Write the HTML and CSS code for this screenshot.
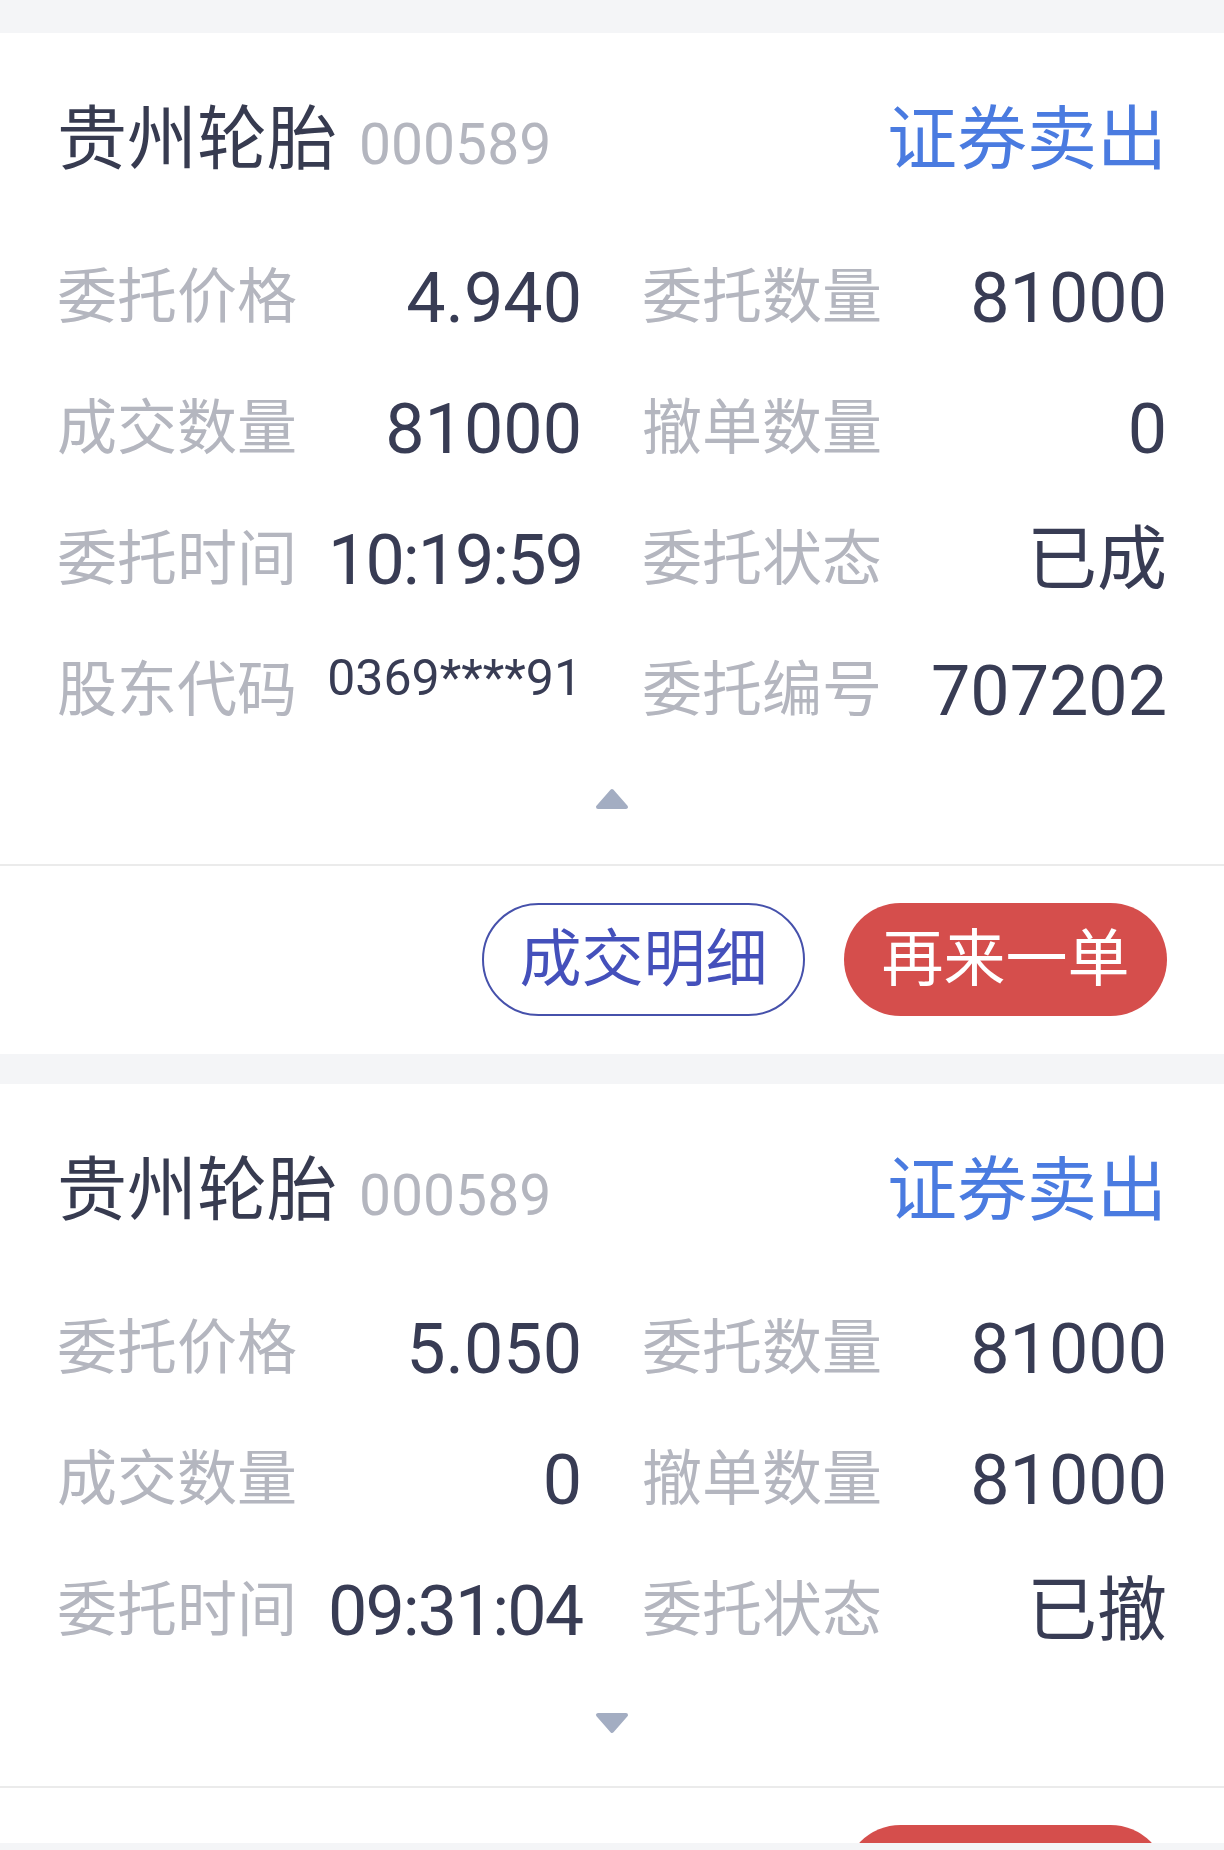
FILE: index.html
```html
<!DOCTYPE html>
<html>
  <head>
    <meta charset="utf-8">
    <title>当日委托</title>
    <link rel="stylesheet" href="styles.css">
  </head>
  <body>
    <div class="list">
      <section class="order">
        <div class="order-head">
          <div class="stock">
            <span class="name">贵州轮胎</span>
            <span class="code">000589</span>
          </div>
          <span class="side">证券卖出</span>
        </div>
        <div class="fields">
          <div class="field"><span class="label">委托价格</span><span class="value">4.940</span></div>
          <div class="field"><span class="label">委托数量</span><span class="value">81000</span></div>
          <div class="field"><span class="label">成交数量</span><span class="value">81000</span></div>
          <div class="field"><span class="label">撤单数量</span><span class="value">0</span></div>
          <div class="field"><span class="label">委托时间</span><span class="value time">10:19:59</span></div>
          <div class="field"><span class="label">委托状态</span><span class="value">已成</span></div>
          <div class="field"><span class="label">股东代码</span><span class="value holder">0369****91</span></div>
          <div class="field"><span class="label">委托编号</span><span class="value">707202</span></div>
        </div>
        <div class="toggle">
          <svg width="34" height="22" viewBox="0 0 34 22"><path d="M17 3 L31 19 H3 Z"/></svg>
        </div>
        <div class="actions">
          <button type="button" class="btn btn-line">成交明细</button>
          <button type="button" class="btn btn-red">再来一单</button>
        </div>
      </section>
      <section class="order">
        <div class="order-head">
          <div class="stock">
            <span class="name">贵州轮胎</span>
            <span class="code">000589</span>
          </div>
          <span class="side">证券卖出</span>
        </div>
        <div class="fields">
          <div class="field"><span class="label">委托价格</span><span class="value">5.050</span></div>
          <div class="field"><span class="label">委托数量</span><span class="value">81000</span></div>
          <div class="field"><span class="label">成交数量</span><span class="value">0</span></div>
          <div class="field"><span class="label">撤单数量</span><span class="value">81000</span></div>
          <div class="field"><span class="label">委托时间</span><span class="value time">09:31:04</span></div>
          <div class="field"><span class="label">委托状态</span><span class="value">已撤</span></div>
        </div>
        <div class="toggle down">
          <svg width="34" height="22" viewBox="0 0 34 22"><path d="M3 3 H31 L17 19 Z"/></svg>
        </div>
        <div class="actions">
          <button type="button" class="btn btn-red">再来一单</button>
        </div>
      </section>
    </div>
    <div class="bottom-bar"></div>
  </body>
</html>
```

FILE: styles.css
```css
* {
  margin: 0;
  padding: 0;
  box-sizing: border-box;
}
body {
  font-family: Roboto, "Noto Sans CJK SC", sans-serif;
  background-color: #f4f5f7;
  padding-top: 33px;
}
.order {
  background-color: #fff;
  padding-top: 57px;
  margin-bottom: 30px;
}
.order-head {
  display: flex;
  justify-content: space-between;
  align-items: center;
  height: 100px;
  padding: 0 57px;
}
.stock {
  display: flex;
  align-items: baseline;
}
.name {
  font-size: 70px;
  line-height: 1;
  color: #373b50;
}
.code {
  font-size: 57px;
  line-height: 1;
  color: #b4b6bf;
  margin-left: 22px;
}
.side {
  font-size: 70px;
  line-height: 1;
  color: #4a7be0;
}
.fields {
  display: grid;
  grid-template-columns: 1fr 1fr;
  column-gap: 60px;
  margin-top: 42px;
  padding: 0 57px;
}
.field {
  display: flex;
  justify-content: space-between;
  align-items: center;
  height: 131px;
}
.label {
  font-size: 60px;
  line-height: 1;
  color: #b4b6bf;
}
.value {
  font-size: 70px;
  line-height: 1;
  color: #383c54;
}
.value.time {
  letter-spacing: -2px;
}
.value.holder {
  font-size: 50px;
  align-self: flex-start;
  margin-top: 28px;
}
.toggle {
  display: flex;
  justify-content: center;
  padding: 32px 0 54px;
}
.toggle.down {
  padding: 36px 0 52px;
}
.toggle path {
  fill: #a3adc2;
  stroke: #a3adc2;
  stroke-width: 4;
  stroke-linejoin: round;
}
.actions {
  display: flex;
  justify-content: flex-end;
  gap: 39px;
  border-top: 2px solid #ebebeb;
  padding: 37px 57px 38px;
}
.btn {
  width: 323px;
  height: 113px;
  border-radius: 57px;
  font-family: inherit;
  font-size: 62px;
  line-height: 1;
}
.btn-line {
  background-color: #fff;
  border: 2px solid #4651ab;
  color: #4450bb;
}
.btn-red {
  background-color: #d54e4c;
  border: none;
  color: #fff;
}
.bottom-bar {
  position: fixed;
  left: 0;
  right: 0;
  bottom: 0;
  height: 7px;
  background-color: #f4f5f7;
}
```
